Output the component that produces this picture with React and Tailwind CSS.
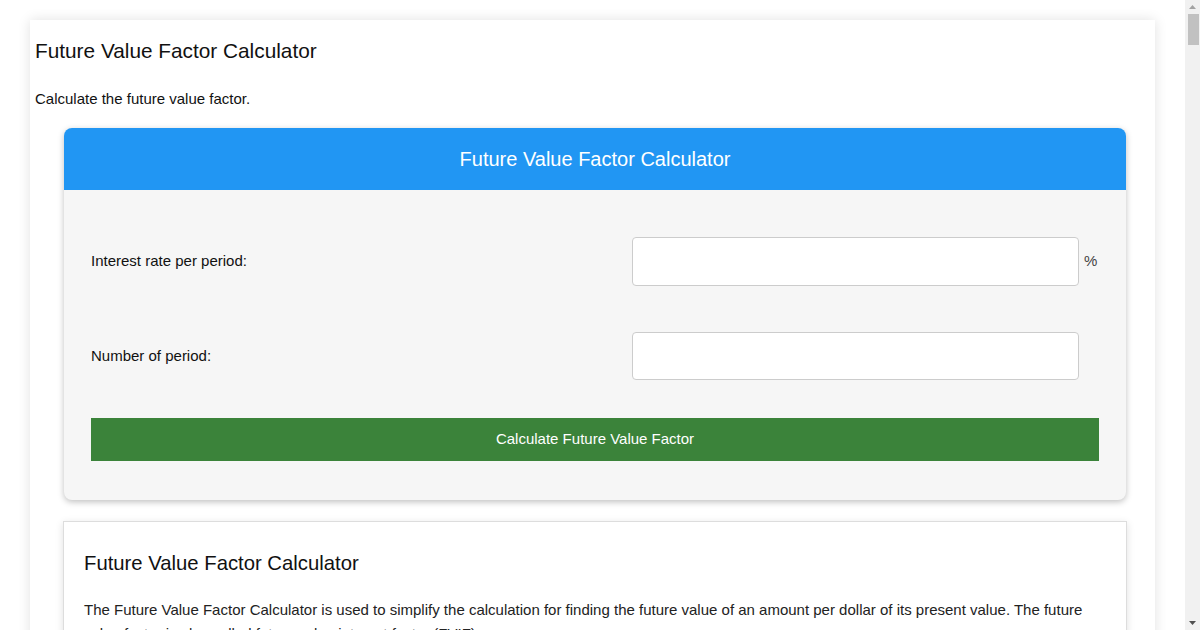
import React from "react";

const Row = ({ label, unit, tall }) => (
  <div className="flex items-center">
    <label className="flex-1 text-[15px] text-[#111]">{label}</label>
    <input
      type="text"
      className={
        tall
          ? "w-[447px] h-[49px] bg-white border border-[#ccc] rounded-[4px] px-3 text-[15px] outline-none"
          : "w-[447px] h-[48px] bg-white border border-[#ccc] rounded-[4px] px-3 text-[15px] outline-none"
      }
    />
    <span className="w-[20px] pl-[5px] text-[15px] text-[#444]">{unit}</span>
  </div>
);

const Scrollbar = () => (
  <div className="w-[15px] h-full bg-[#f1f1f1] flex flex-col items-center">
    <svg width="15" height="14" viewBox="0 0 15 14" className="shrink-0">
      <polygon points="4,9 11,9 7.5,5" fill="#a3a3a3" />
    </svg>
    <div className="w-[11px] h-[31px] ml-[1px] bg-[#c1c1c1]" />
    <div className="flex-1" />
    <svg width="15" height="14" viewBox="0 0 15 14" className="shrink-0">
      <polygon points="4,5 11,5 7.5,9" fill="#505050" />
    </svg>
  </div>
);

const App = () => {
  return (
    <div className="h-screen flex bg-white font-['Liberation_Sans',Arial,sans-serif] text-[#111]">
      <div className="flex-1 overflow-hidden pt-[20px]">
        <div className="w-[1125px] mx-auto bg-white shadow-[0_0_12px_rgba(0,0,0,0.12)] px-[5px] pb-10">
          <h1 className="text-[20.8px] leading-[26px] pt-[18px]">Future Value Factor Calculator</h1>
          <p className="text-[15px] leading-[20px] mt-[25px]">Calculate the future value factor.</p>

          <div className="ml-[29px] mr-[24px] mt-[19px] rounded-[8px] overflow-hidden bg-[#f6f6f6] shadow-[0_2px_6px_rgba(0,0,0,0.25)]">
            <div className="h-[62px] bg-[#2196f3] flex items-center justify-center text-white text-[20px]">
              Future Value Factor Calculator
            </div>
            <div className="px-[27px] pt-[47px] pb-[39px]">
              <Row label="Interest rate per period:" unit="%" tall />
              <div className="mt-[46px]">
                <Row label="Number of period:" unit="" />
              </div>
              <button className="mt-[38px] w-full h-[43px] bg-[#3b833a] text-white text-[15px]">
                Calculate Future Value Factor
              </button>
            </div>
          </div>

          <div className="ml-[28px] mr-[23px] mt-[21px] border border-[#ddd] bg-white shadow-[0_2px_8px_rgba(0,0,0,0.12)] px-[20px] pt-[28px] pb-6">
            <h2 className="text-[20.3px] leading-[26px]">Future Value Factor Calculator</h2>
            <p className="text-[15px] leading-[24px] mt-[22px] text-[#222]">
              The Future Value Factor Calculator is used to simplify the calculation for finding the future value of an amount per dollar of its present value. The future value factor is also called future value interest factor (FVIF).
            </p>
          </div>
        </div>
      </div>
      <Scrollbar />
    </div>
  );
};

export default App;
